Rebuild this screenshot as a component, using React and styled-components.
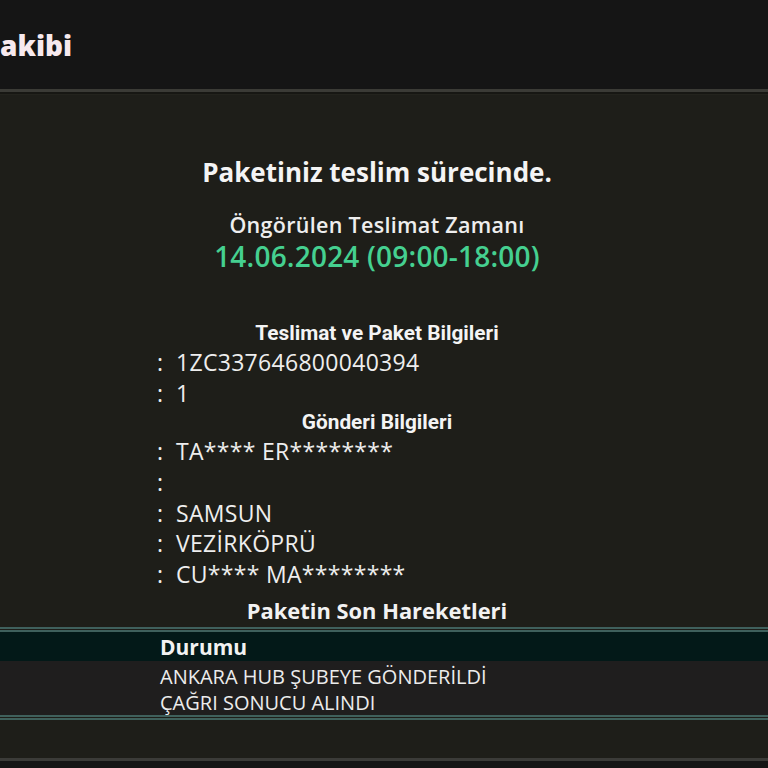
import React from "react";
import styled, { createGlobalStyle } from "styled-components";

const Global = createGlobalStyle`
  html, body { margin: 0; padding: 0; background: #151515; }
  body { font-family: "Open Sans", "Noto Sans", sans-serif; color: #f2f2f2; overflow: hidden; }
`;

const Page = styled.div`
  width: 768px;
  height: 768px;
  display: flex;
  flex-direction: column;
  background: #151515;
  overflow: hidden;
`;

const Header = styled.header`
  height: 89px;
  flex: none;
  display: flex;
  align-items: center;
  background: #151515;
  overflow: hidden;
`;

const Brand = styled.h1`
  margin: 0;
  font-family: "Open Sans", sans-serif;
  font-weight: 800;
  font-size: 28px;
  color: #f7e9ee;
  white-space: nowrap;
`;

const Main = styled.main`
  flex: none;
  background: #1e1e19;
  border-top: 3px solid #3b3b36;
  box-shadow: inset 0 2px 0 #171713, inset 0 3px 0 #23231d;
  padding-top: 64px;
  display: flex;
  flex-direction: column;
`;

const Column = styled.div`
  width: 440px;
  margin-left: 157px;
  display: flex;
  flex-direction: column;
  align-items: center;
`;

const Title = styled.h2`
  margin: 0;
  font-family: "Open Sans", sans-serif;
  font-weight: 700;
  font-size: 26px;
  line-height: 32px;
  color: #f4f4f4;
  white-space: nowrap;
`;

const Subtitle = styled.div`
  margin-top: 24px;
  font-family: "Open Sans", sans-serif;
  font-weight: 600;
  font-size: 21.5px;
  letter-spacing: 0.3px;
  line-height: 26px;
  color: #eeeeee;
  white-space: nowrap;
`;

const DateText = styled.div`
  margin-top: 3px;
  font-family: "Open Sans", sans-serif;
  font-weight: 600;
  font-size: 28px;
  letter-spacing: 0.2px;
  line-height: 30px;
  color: #45d090;
  white-space: nowrap;
`;

const SectionTitle = styled.h3`
  margin: ${(p) => p.$top}px 0 0;
  font-family: "Roboto", sans-serif;
  font-weight: 700;
  font-size: 20.8px;
  line-height: 28px;
  color: #f4f4f4;
  white-space: nowrap;
`;

const Row = styled.div`
  align-self: stretch;
  display: flex;
  height: 30.6px;
  align-items: center;
  font-family: "Open Sans", sans-serif;
  font-weight: 400;
  font-size: 23px;
  letter-spacing: 0.3px;
  color: #eeeeee;
  white-space: nowrap;
`;

const Colon = styled.span`
  width: 19px;
  flex: none;
`;

const Movements = styled.h3`
  margin: 8px 0 0 157px;
  width: 440px;
  font-family: "Open Sans", sans-serif;
  font-weight: 700;
  font-size: 21.9px;
  line-height: 28px;
  color: #f2f2f2;
  text-align: center;
  white-space: nowrap;
`;

const Table = styled.div`
  margin-top: 2px;
  border-top: 5px double #3f605c;
  border-bottom: 5px double #3f605c;
  display: flex;
  flex-direction: column;
`;

const HeadRow = styled.div`
  height: 29px;
  background: #031918;
  display: flex;
  align-items: center;
  padding-left: 160px;
  font-family: "Open Sans", sans-serif;
  font-weight: 700;
  font-size: 21px;
  color: #f2f2f2;
`;

const Body = styled.div`
  background: #1f1e1e;
  padding-top: 2px;
`;

const BodyRow = styled.div`
  height: 26px;
  display: flex;
  align-items: center;
  padding-left: 160px;
  font-family: "Open Sans", sans-serif;
  font-weight: 400;
  font-size: 20px;
  color: #ececec;
  white-space: nowrap;
`;

const Spacer = styled.div`
  height: 38px;
`;

const Footer = styled.footer`
  flex: 1;
  border-top: 3px solid #3b3b38;
  background: #151515;
`;

const deliveryRows = ["1ZC337646800040394", "1"];
const senderRows = ["TA**** ER********", "", "SAMSUN", "VEZİRKÖPRÜ", "CU**** MA********"];
const movements = ["ANKARA HUB ŞUBEYE GÖNDERİLDİ", "ÇAĞRI SONUCU ALINDI"];

export default function App() {
  return (
    <Page>
      <Global />
      <Header>
        <Brand>akibi</Brand>
      </Header>
      <Main>
        <Column>
          <Title>Paketiniz teslim sürecinde.</Title>
          <Subtitle>Öngörülen Teslimat Zamanı</Subtitle>
          <DateText>14.06.2024 (09:00-18:00)</DateText>
          <SectionTitle $top={48}>Teslimat ve Paket Bilgileri</SectionTitle>
          {deliveryRows.map((v, i) => (
            <Row key={"a" + i}>
              <Colon>:</Colon>
              {v}
            </Row>
          ))}
          <SectionTitle $top={0}>Gönderi Bilgileri</SectionTitle>
          {senderRows.map((v, i) => (
            <Row key={"b" + i}>
              <Colon>:</Colon>
              {v}
            </Row>
          ))}
        </Column>
        <Movements>Paketin Son Hareketleri</Movements>
        <Table>
          <HeadRow>Durumu</HeadRow>
          <Body>
            {movements.map((m) => (
              <BodyRow key={m}>{m}</BodyRow>
            ))}
          </Body>
        </Table>
        <Spacer />
      </Main>
      <Footer />
    </Page>
  );
}
